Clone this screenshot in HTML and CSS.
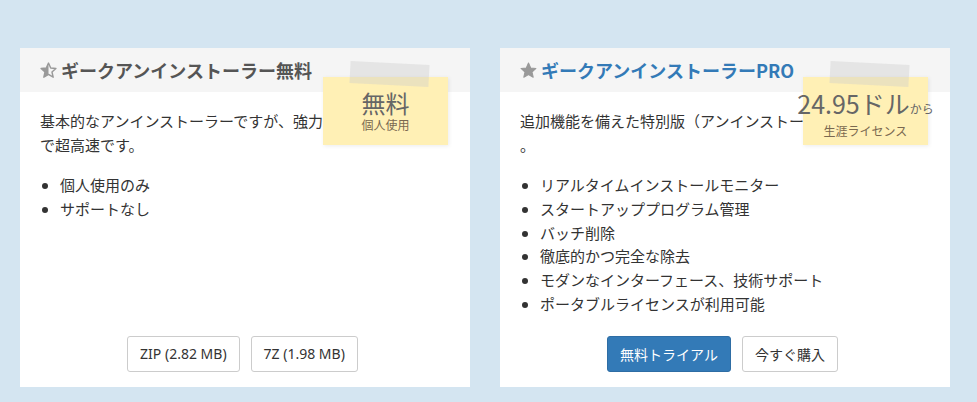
FILE: index.html
```html
<!DOCTYPE html>
<html lang="ja">
<head>
<meta charset="utf-8">
<title>ギークアンインストーラー</title>
<link rel="stylesheet" href="styles.css">
</head>
<body>
<div class="page">
  <div class="card">
    <div class="card-head">
      <svg class="star" width="17" height="17" viewBox="0 0 24 24">
        <defs>
          <clipPath id="halfL"><rect x="0" y="0" width="12" height="24"/></clipPath>
        </defs>
        <path d="M12 1.5l3.1 6.9 7.4.7-5.6 5 1.7 7.4L12 17.6l-6.6 3.9 1.7-7.4-5.6-5 7.4-.7z" fill="none" stroke="#999" stroke-width="2" stroke-linejoin="round"/>
        <path d="M12 1.5l3.1 6.9 7.4.7-5.6 5 1.7 7.4L12 17.6l-6.6 3.9 1.7-7.4-5.6-5 7.4-.7z" fill="#999" clip-path="url(#halfL)"/>
      </svg>
      <h3 class="title title-free">ギークアンインストーラー無料</h3>
    </div>
    <div class="card-body">
      <p class="desc">基本的なアンインストーラーですが、強力<br>で超高速です。</p>
      <ul class="features">
        <li>個人使用のみ</li>
        <li>サポートなし</li>
      </ul>
    </div>
    <div class="card-foot">
      <a class="btn btn-default">ZIP (2.82 MB)</a>
      <a class="btn btn-default">7Z (1.98 MB)</a>
    </div>
    <div class="note">
      <span class="tape"></span>
      <div class="note-price">無料</div>
      <div class="note-sub">個人使用</div>
    </div>
  </div>

  <div class="card">
    <div class="card-head">
      <svg class="star" width="17" height="17" viewBox="0 0 24 24">
        <path d="M12 1.5l3.1 6.9 7.4.7-5.6 5 1.7 7.4L12 17.6l-6.6 3.9 1.7-7.4-5.6-5 7.4-.7z" fill="#999" stroke="#999" stroke-width="1.5" stroke-linejoin="round"/>
      </svg>
      <h3 class="title title-pro">ギークアンインストーラーPRO</h3>
    </div>
    <div class="card-body">
      <p class="desc">追加機能を備えた特別版（アンインストー<br>。</p>
      <ul class="features">
        <li>リアルタイムインストールモニター</li>
        <li>スタートアッププログラム管理</li>
        <li>バッチ削除</li>
        <li>徹底的かつ完全な除去</li>
        <li>モダンなインターフェース、技術サポート</li>
        <li>ポータブルライセンスが利用可能</li>
      </ul>
    </div>
    <div class="card-foot">
      <a class="btn btn-primary">無料トライアル</a>
      <a class="btn btn-default">今すぐ購入</a>
    </div>
    <div class="note">
      <span class="tape"></span>
      <div class="note-price note-price-pro">24.95ドル<span class="from">から</span></div>
      <div class="note-sub">生涯ライセンス</div>
    </div>
  </div>
</div>
</body>
</html>
```

FILE: styles.css
```css
html, body {
  margin: 0;
  padding: 0;
}
body {
  background: #d4e5f1;
  font-family: "Noto Sans CJK JP", "Noto Sans", sans-serif;
  color: #333;
  font-size: 15px;
}
.page {
  display: grid;
  grid-template-columns: 450px 450px;
  column-gap: 30px;
  padding: 48px 0 15px 20px;
}
.card {
  position: relative;
  background: #fff;
  display: flex;
  flex-direction: column;
}
.card-head {
  height: 44px;
  background: #f5f5f5;
  display: flex;
  align-items: center;
  padding: 0 20px;
  gap: 4px;
}
.star {
  flex: none;
  margin-top: 1px;
}
.title {
  margin: 0;
  font-size: 18px;
  font-weight: bold;
  line-height: 24px;
}
.title-free { color: #555; }
.title-pro { color: #337ab7; }
.card-body {
  padding: 17px 20px 0 20px;
}
.desc {
  margin: 0 0 16px 0;
  line-height: 24px;
  font-size: 15px;
}
.features {
  margin: 0;
  padding-left: 20px;
  line-height: 23.8px;
  font-size: 15px;
}
.card-foot {
  margin-top: auto;
  padding: 20px 25px 15px 20px;
  display: flex;
  justify-content: center;
  gap: 11px;
}
.btn {
  display: inline-flex;
  align-items: center;
  justify-content: center;
  height: 36px;
  box-sizing: border-box;
  padding: 0 12px;
  border: 1px solid #ccc;
  border-radius: 3px;
  font-family: "Noto Sans", "Noto Sans CJK JP", sans-serif;
  font-size: 14px;
  color: #333;
  background: #fff;
}
.btn-primary {
  background: #337ab7;
  border-color: #2e6da4;
  color: #fff;
  font-family: "Noto Sans CJK JP", sans-serif;
}
.note {
  position: absolute;
  left: 303px;
  top: 29px;
  width: 125px;
  height: 68px;
  background: #fff0b5;
  box-shadow: 1px 1px 4px rgba(0,0,0,0.08);
  text-align: center;
  white-space: nowrap;
  display: flex;
  flex-direction: column;
  align-items: center;
}
.tape {
  position: absolute;
  left: 27px;
  top: -14px;
  width: 79px;
  height: 22px;
  background: rgba(205, 205, 205, 0.4);
  transform: rotate(3deg);
}
.note-price {
  margin-top: 13px;
  font-size: 24px;
  line-height: 26px;
  color: #666;
}
.note-price-pro {
  font-size: 25px;
}
.from {
  font-size: 12px;
}
.note-sub {
  margin-top: 1px;
  font-size: 12px;
  line-height: 16px;
  color: #7a6850;
}
```
